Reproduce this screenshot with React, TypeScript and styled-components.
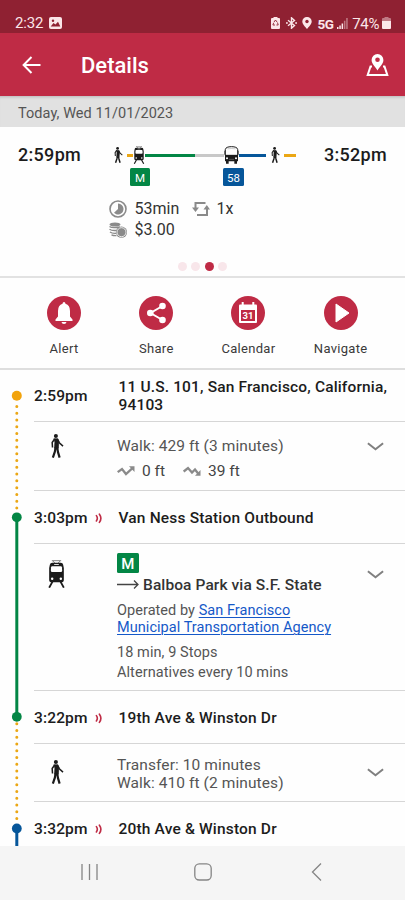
import React from "react";
import styled, { createGlobalStyle } from "styled-components";

const crimson = "#bf2b45";
const green = "#038645";
const blue = "#06569a";
const amber = "#eba715";

const GlobalStyle = createGlobalStyle`
  * { box-sizing: border-box; }
  body {
    margin: 0;
    background: #fff;
    font-family: Roboto, "Liberation Sans", sans-serif;
    color: #1c1c1c;
  }
  svg { display: block; flex: none; }
`;

const Screen = styled.div`
  width: 405px;
  height: 900px;
  display: flex;
  flex-direction: column;
  overflow: hidden;
  background: #fefefe;
`;

const Label = styled.span<{ $size: number; $weight?: number; $spacing?: number; $color?: string; $line?: number }>`
  font-size: ${(p) => p.$size}px;
  font-weight: ${(p) => p.$weight ?? 400};
  letter-spacing: ${(p) => p.$spacing ?? 0}px;
  line-height: ${(p) => p.$line ?? 18}px;
  color: ${(p) => p.$color ?? "inherit"};
  white-space: nowrap;
`;

const StatusBar = styled.header`
  height: 33px;
  flex: none;
  padding: 13px 14px 0 15px;
  display: flex;
  justify-content: space-between;
  background: #8f2132;
  color: #fbe6e9;
`;

const StatusGroup = styled.div`
  display: flex;
  align-items: center;
  height: 20px;
`;

const StatusIcon = styled.span<{ $left: number }>`
  margin-left: ${(p) => p.$left}px;
`;

const AppBar = styled.div`
  height: 63px;
  flex: none;
  display: flex;
  align-items: center;
  padding: 1px 16px 0 22px;
  background: ${crimson};
  color: #fff;
`;

const Title = styled.h1`
  flex: 1;
  margin: 1px 0 0 40px;
  font-size: 22px;
  font-weight: 500;
  line-height: 28px;
`;

const DateBar = styled.div`
  height: 31px;
  flex: none;
  padding: 7px 18px 0;
  background: #e1e1e1;
  box-shadow: inset 0 3px 3px -2px rgba(0, 0, 0, 0.18);
`;

const Summary = styled.section`
  height: 151px;
  flex: none;
  display: flex;
  flex-direction: column;
  border-bottom: 2px solid #e2e2e2;
`;

const SummaryTop = styled.div`
  display: flex;
  align-items: flex-start;
  height: 71px;
  padding: 17px 18px 0;
`;

const Strip = styled.div`
  display: flex;
  align-items: center;
  height: 22px;
`;

const StripColumn = styled.div`
  display: flex;
  flex-direction: column;
  gap: 2px;
  flex: 1;
  margin-left: 32.500px;
`;

const Segment = styled.i<{ $w: number; $color: string; $left?: number }>`
  width: ${(p) => p.$w}px;
  height: 3px;
  margin-left: ${(p) => p.$left ?? 0}px;
  background: ${(p) => p.$color};
`;

const StripBadges = styled.div`
  display: flex;
  padding-left: 16.500px;
  gap: 73px;
`;

const LineBadge = styled.span<{ $color: string; $w: number; $h: number; $size: number; $weight?: number }>`
  display: inline-flex;
  align-items: center;
  justify-content: center;
  width: ${(p) => p.$w}px;
  height: ${(p) => p.$h}px;
  border-radius: 1.5px;
  background: ${(p) => p.$color};
  color: #fff;
  font-size: ${(p) => p.$size}px;
  font-weight: ${(p) => p.$weight ?? 400};
  padding-top: 1px;
`;

const Facts = styled.div`
  display: grid;
  grid-template-columns: 25.500px 57px 25px 1fr;
  grid-auto-rows: 21.5px;
  align-items: center;
  padding-left: 109px;
`;

const Pager = styled.div`
  display: flex;
  justify-content: center;
  gap: 4.5px;
  margin-top: 21px;
`;

const PageDot = styled.i<{ $active?: boolean }>`
  width: 9px;
  height: 9px;
  border-radius: 50%;
  background: ${(p) => (p.$active ? crimson : "#f8e6ea")};
`;

const Actions = styled.nav`
  height: 92px;
  flex: none;
  display: grid;
  grid-template-columns: repeat(4, 92.2px);
  padding: 18px 18px 0;
  border-bottom: 2px solid #dedede;
`;

const Action = styled.button`
  display: flex;
  flex-direction: column;
  align-items: center;
  gap: 10px;
  padding: 0;
  border: 0;
  background: none;
  font-family: inherit;
  color: #3a3a3a;
`;

const ActionDisc = styled.span`
  width: 34px;
  height: 34px;
  border-radius: 50%;
  background: ${crimson};
  display: grid;
  place-items: center;
`;

const Itinerary = styled.main`
  flex: 1;
  min-height: 0;
  display: flex;
  overflow: hidden;
`;

const Steps = styled.div`
  flex: 1;
`;

const Step = styled.div<{ $h: number; $last?: boolean }>`
  display: grid;
  grid-template-columns: 84.500px 1fr;
  height: ${(p) => p.$h}px;
  border-bottom: ${(p) => (p.$last ? "0" : "1px solid #d6d6d6")};
`;

const TimeCell = styled.div<{ $top: number }>`
  display: flex;
  align-items: center;
  gap: 7px;
  height: 18px;
  margin-top: ${(p) => p.$top}px;
`;

const PlaceCell = styled.div<{ $top: number }>`
  display: flex;
  flex-direction: column;
  padding-top: ${(p) => p.$top}px;
`;

const ModeCell = styled.div<{ $top: number; $left: number }>`
  padding: ${(p) => p.$top}px 0 0 ${(p) => p.$left}px;
`;

const LegCell = styled.div<{ $top: number }>`
  display: flex;
  justify-content: space-between;
  align-items: flex-start;
  padding: ${(p) => p.$top}px 21px 0 0;
  margin-left: -1.500px;
`;

const LegText = styled.div`
  display: flex;
  flex-direction: column;
  align-items: flex-start;
`;

const Line = styled.div<{ $top?: number; $gap?: number }>`
  display: flex;
  align-items: center;
  gap: ${(p) => p.$gap ?? 0}px;
  margin-top: ${(p) => p.$top ?? 0}px;
`;

const Chevron = styled.span<{ $top: number }>`
  margin-top: ${(p) => p.$top}px;
`;

const AgencyLink = styled.a`
  color: #1558c8;
  text-decoration: underline;
  text-underline-offset: 2px;
  text-decoration-thickness: 1px;
`;

const SystemNav = styled.footer`
  height: 54px;
  flex: none;
  display: flex;
  align-items: flex-start;
  padding: 17px 0 0 81px;
  background: #f5f5f5;
`;

const NavKey = styled.span<{ $left?: number }>`
  margin-left: ${(p) => p.$left ?? 0}px;
`;

const Walker = ({ w, h }: { w: number; h: number }) => (
  <svg width={w} height={h} viewBox="0 0 36 71" fill="none" stroke="#1b1b1b" strokeLinejoin="round">
    <circle cx="14" cy="6" r="6" fill="#1b1b1b" stroke="none" />
    <path d="M8 14h12l3 9-2 19h-11l1-18z" fill="#1b1b1b" strokeWidth="2" />
    <path d="M20 17l4 9 11 10" strokeWidth="4.500" />
    <path d="M10 15l-7 10 1 15" strokeWidth="4.500" />
    <path d="M13 40l-2 12-6 18M18 40l2 13 5 17" strokeWidth="6.500" />
  </svg>
);

const Tram = ({ w, h }: { w: number; h: number }) => (
  <svg width={w} height={h} viewBox="0 0 48 84">
    <path d="M10 2h28M13 3l6 6M35 3l-6 6" stroke="#555" strokeWidth="2.200" fill="none" />
    <path d="M4 14q1-6 7-6h26q6 0 7 6l2 10v35q0 8-8 8H10q-8 0-8-8V24z" fill="#1b1b1b" />
    <path d="M11 19h26q3 0 3.300 3l.7 10q0 4-4 4H11q-4 0-4-4l.7-10q.3-3 3.300-3z" fill="#fff" />
    <path d="M17 13.500h14" stroke="#fff" strokeWidth="2.500" />
    <circle cx="11" cy="56" r="3.700" fill="#fff" />
    <circle cx="37" cy="56" r="3.700" fill="#fff" />
    <path d="M12 65L2 83M36 65l10 18" stroke="#1b1b1b" strokeWidth="5.500" fill="none" />
  </svg>
);

const Bus = () => (
  <svg width="15" height="18" viewBox="0 0 45 54">
    <path d="M4 28V10Q6 2 22.500 2T41 10v18z" fill="#fff" stroke="#1b1b1b" strokeWidth="3" />
    <path d="M10 8.500q12-2 25 0" stroke="#999" strokeWidth="1.500" fill="none" />
    <path d="M3 27h39v17q0 2-2 2H5q-2 0-2-2z" fill="#1b1b1b" />
    <path d="M1 14v12M44 14v12" stroke="#1b1b1b" strokeWidth="2" />
    <circle cx="9" cy="37" r="3" fill="#fff" />
    <circle cx="36" cy="37" r="3" fill="#fff" />
    <path d="M15 40h15" stroke="#888" strokeWidth="1.500" />
    <path d="M6 45h8v8H6zM31 45h8v8h-8z" fill="#1b1b1b" />
  </svg>
);

const Live = () => (
  <svg width="8" height="11" viewBox="0 0 8 11" fill="none" stroke="#bf2b45" strokeWidth="1.600" strokeLinecap="round">
    <path d="M1.400 2.600q1.900 2.700 0 5.400M4.400 1.200q3 4.100 0 8.200" />
  </svg>
);

const ChevronIcon = () => (
  <svg width="17" height="9" viewBox="0 0 17 9" fill="none" stroke="#808080" strokeWidth="2">
    <path d="M.9 1.300l7.600 6 7.600-6" />
  </svg>
);

const Trend = ({ down }: { down?: boolean }) => (
  <svg width="18" height="10" viewBox="0 0 18 10" fill="none" stroke="#8a8a8a" strokeWidth="2.300">
    {down ? <path d="M.7 5.500L5 2l4 4.500 3-3L15.500 8" /> : <path d="M.7 6.200L5 3l4 5 6.500-5.800" />}
    <path d={down ? "M17.500 4v5.700H12z" : "M12 .3h5.500V6z"} fill="#8a8a8a" stroke="none" />
  </svg>
);

const Rail = () => (
  <svg width="34" height="476" viewBox="0 370 34 476">
    <g stroke={amber} strokeWidth="3" strokeLinecap="round" strokeDasharray="0 6.770">
      <path d="M16.800 406.400V513" />
      <path d="M16.800 723.700V824" />
    </g>
    <path d="M16.800 517V717" stroke={green} strokeWidth="3" />
    <path d="M16.800 829v18" stroke={blue} strokeWidth="3" />
    <circle cx="16.800" cy="395.700" r="5" fill="#f2a30c" />
    <circle cx="16.800" cy="517.300" r="4.900" fill={green} />
    <circle cx="16.800" cy="716.800" r="4.900" fill={green} />
    <circle cx="16.800" cy="828.500" r="4.900" fill={blue} />
  </svg>
);

const Stop = ({ h, time, place, top, last }: { h: number; time: string; place: string; top: number; last?: boolean }) => (
  <Step $h={h} $last={last}>
    <TimeCell $top={top}>
      <Label $size={15.5} $weight={500} $spacing={0.15}>{time}</Label>
      <Live />
    </TimeCell>
    <PlaceCell $top={top}>
      <Label $size={15.5} $weight={500} $spacing={0.17}>{place}</Label>
    </PlaceCell>
  </Step>
);

export default function App() {
  return (
    <Screen>
      <GlobalStyle />
      <StatusBar>
        <StatusGroup>
          <Label $size={15} $spacing={-0.2}>2:32</Label>
          <StatusIcon $left={6}>
            <svg width="13" height="12" viewBox="0 0 13 12">
              <rect width="13" height="12" rx="2" fill="#fbe6e9" />
              <circle cx="4" cy="3.700" r="1.200" fill="#8f2132" />
              <path d="M1.700 9.500L4.500 6l2 1.500L9 4.700l2.300 4.800z" fill="#8f2132" />
            </svg>
          </StatusIcon>
        </StatusGroup>
        <StatusGroup>
          <svg width="9" height="12" viewBox="0 0 9 12">
            <path d="M2.500 0h4v1H8q1 0 1 1v9q0 1-1 1H1q-1 0-1-1V2q0-1 1-1h1.500z" fill="#fbe6e9" />
            <path d="M3 5l1.500-2L6 5M6.500 5.500L7.200 8H5.400M4 8H1.900l.8-2.300" fill="none" stroke="#8f2132" strokeWidth=".9" />
          </svg>
          <StatusIcon $left={6}>
            <svg width="11" height="12" viewBox="0 0 11 12" fill="none" stroke="#fbe6e9" strokeWidth="1.400">
              <path d="M2 3.200l6.500 5.300-3 2.700V.8l3 2.700L2 8.800" />
              <path d="M0 6h1.800M9.200 6H11" strokeWidth="1.600" />
            </svg>
          </StatusIcon>
          <StatusIcon $left={5}>
            <svg width="10" height="12" viewBox="0 0 10 12">
              <path d="M5 0a4.600 4.600 0 014.700 4.600C9.700 7.500 6.600 10 5 12 3.400 10 .3 7.500.3 4.600A4.600 4.600 0 015 0z" fill="#fbe6e9" />
              <circle cx="5" cy="4.500" r="1.700" fill="#8f2132" />
            </svg>
          </StatusIcon>
          <StatusIcon $left={5}>
            <Label $size={13.5} $weight={700} $spacing={-0.5}>5G</Label>
          </StatusIcon>
          <StatusIcon $left={4}>
            <svg width="11" height="11" viewBox="0 0 11 11" fill="#fbe6e9">
              <path d="M0 9h1.500v2H0zM2.300 7.500h1.500V11H2.300zM4.600 5.500h1.500V11H4.600z" />
              <path d="M6.900 2.800h1.500V11H6.900zM9.200 0h1.500v11H9.200z" opacity=".45" />
            </svg>
          </StatusIcon>
          <StatusIcon $left={4}>
            <Label $size={15} $spacing={-0.4}>74%</Label>
          </StatusIcon>
          <StatusIcon $left={3}>
            <svg width="9" height="12" viewBox="0 0 9 12" fill="#fbe6e9">
              <path d="M2.500 0h4v1H8q1 0 1 1v2H0V2q0-1 1-1h1.500z" opacity=".45" />
              <path d="M0 4h9v7q0 1-1 1H1q-1 0-1-1z" />
            </svg>
          </StatusIcon>
        </StatusGroup>
      </StatusBar>

      <AppBar>
        <svg width="19" height="18" viewBox="0 0 19 18" fill="none" stroke="#fff" strokeWidth="2">
          <path d="M18.500 9H2M9.500 1L1.600 9l7.900 8" />
        </svg>
        <Title>Details</Title>
        <svg width="23" height="23" viewBox="0 0 23 23">
          <path d="M11.500 0a5.900 5.900 0 015.900 5.900c0 4-3.700 6.600-5.900 10.500-2.200-3.900-5.900-6.500-5.900-10.500A5.900 5.900 0 0111.500 0z" fill="#fff" />
          <circle cx="11.500" cy="5.700" r="2.300" fill={crimson} />
          <path d="M6 12.500H4.500L1.700 21h19.600l-2.800-8.500H17" fill="none" stroke="#fff" strokeWidth="2" />
        </svg>
      </AppBar>

      <DateBar>
        <Label $size={14.5} $spacing={0.06} $color="#555">Today, Wed 11/01/2023</Label>
      </DateBar>

      <Summary>
        <SummaryTop>
          <Label $size={18} $weight={500} $spacing={0.3} $line={22}>2:59pm</Label>
          <StripColumn>
            <Strip>
              <Walker w={9} h={16} />
              <Segment $w={6} $color={amber} $left={4} />
              <Tram w={12} h={18} />
              <Segment $w={50} $color={green} />
              <Segment $w={29} $color="#c8c8c8" />
              <Bus />
              <Segment $w={27} $color={blue} />
              <Segment $w={5} $color="transparent" />
              <Walker w={9} h={16} />
              <Segment $w={12} $color={amber} $left={4} />
            </Strip>
            <StripBadges>
              <LineBadge $color={green} $w={20} $h={18} $size={11.5}>M</LineBadge>
              <LineBadge $color={blue} $w={21} $h={18} $size={11.5}>58</LineBadge>
            </StripBadges>
          </StripColumn>
          <Label $size={18} $weight={500} $spacing={0.3} $line={22}>3:52pm</Label>
        </SummaryTop>
        <Facts>
          <svg width="18" height="18" viewBox="0 0 18 18">
            <circle cx="9" cy="9" r="8" fill="none" stroke="#8a8a8a" strokeWidth="1.600" />
            <path d="M9 3.500a5.500 5.500 0 11-4 9.300L9 9z" fill="#8a8a8a" />
          </svg>
          <Label $size={16} $color="#333">53min</Label>
          <svg width="18" height="16" viewBox="0 0 18 16">
            <path d="M13.500 2H3.500v7M5 14h10V7" fill="none" stroke="#8a8a8a" strokeWidth="2" />
            <path d="M0 6.500h7L3.500 11zM11.500 8.500h6.500L14.800 4z" fill="#8a8a8a" />
          </svg>
          <Label $size={16} $color="#333">1x</Label>
          <svg width="18" height="16" viewBox="0 0 18 16">
            <ellipse cx="6" cy="2.500" rx="5.500" ry="2" fill="#8a8a8a" />
            <path d="M.5 4.500Q3 6.500 11 5M.5 7.200Q3 9 8 8.300M1 10q2 1.600 6 1.300M2.500 12.800q2 1 5 .8" fill="none" stroke="#8a8a8a" strokeWidth="1.300" />
            <circle cx="12.500" cy="10.200" r="5.600" fill="#8a8a8a" />
            <circle cx="12.500" cy="10.200" r="4.500" fill="none" stroke="#fff" strokeWidth=".8" />
          </svg>
          <Label $size={16} $color="#333">$3.00</Label>
        </Facts>
        <Pager>
          <PageDot />
          <PageDot />
          <PageDot $active />
          <PageDot />
        </Pager>
      </Summary>

      <Actions>
        <Action>
          <ActionDisc>
            <svg width="20" height="23" viewBox="0 0 20 23" fill="#fff">
              <path d="M10 0q1.300 0 1.500 1.700Q16 3 16 9v5.500l2.500 3V19h-17v-1.500l2.500-3V9q0-6 4.500-7.300Q8.700 0 10 0zM7.500 20h5q-.3 2-2.500 2t-2.500-2z" />
            </svg>
          </ActionDisc>
          <Label $size={13} $spacing={0.3}>Alert</Label>
        </Action>
        <Action>
          <ActionDisc>
            <svg width="21" height="22" viewBox="0 0 21 22" fill="#fff">
              <path d="M16.500 4L4.500 11l12 7" fill="none" stroke="#fff" strokeWidth="2" />
              <circle cx="16.500" cy="4" r="3.300" />
              <circle cx="4.300" cy="11" r="3.300" />
              <circle cx="16.500" cy="18" r="3.300" />
            </svg>
          </ActionDisc>
          <Label $size={13} $spacing={0.3}>Share</Label>
        </Action>
        <Action>
          <ActionDisc>
            <svg width="20" height="22" viewBox="0 0 20 22">
              <path d="M2 2.500h16q1 0 1 1V20q0 1-1 1H2q-1 0-1-1V3.500q0-1 1-1z" fill="#fff" />
              <rect x="3" y="8" width="14" height="11" fill={crimson} />
              <path d="M4.700 0v4.500M15.300 0v4.500" stroke="#fff" strokeWidth="2" />
              <text x="10" y="17" textAnchor="middle" fontSize="9.500" fontWeight="700" fill="#fff">31</text>
            </svg>
          </ActionDisc>
          <Label $size={13} $spacing={0.3}>Calendar</Label>
        </Action>
        <Action>
          <ActionDisc>
            <svg width="20" height="20" viewBox="0 0 20 20">
              <path d="M5 1l13 9-13 9z" fill="#fff" stroke="#fff" strokeLinejoin="round" />
            </svg>
          </ActionDisc>
          <Label $size={13} $spacing={0.3}>Navigate</Label>
        </Action>
      </Actions>

      <Itinerary>
        <Rail />
        <Steps>
          <Step $h={52}>
            <TimeCell $top={17}>
              <Label $size={15.5} $weight={500} $spacing={0.15}>2:59pm</Label>
            </TimeCell>
            <PlaceCell $top={8}>
              <Label $size={15.5} $weight={500} $spacing={0.15}>11 U.S. 101, San Francisco, California,</Label>
              <Label $size={15.5} $weight={500} $spacing={0.15}>94103</Label>
            </PlaceCell>
          </Step>

          <Step $h={69}>
            <ModeCell $top={12} $left={17}><Walker w={12.5} h={24} /></ModeCell>
            <LegCell $top={15}>
              <LegText>
                <Label $size={15.5} $spacing={0.09} $color="#555">Walk: 429 ft (3 minutes)</Label>
                <Line $top={7} $gap={7}>
                  <Trend />
                  <Label $size={15.5} $color="#444">0 ft</Label>
                  <Segment $w={4} $color="transparent" />
                  <Trend down />
                  <Label $size={15.5} $color="#444">39 ft</Label>
                </Line>
              </LegText>
              <Chevron $top={4.5}><ChevronIcon /></Chevron>
            </LegCell>
          </Step>

          <Stop h={53} time="3:03pm" place="Van Ness Station Outbound" top={18} />

          <Step $h={147}>
            <ModeCell $top={16} $left={14}><Tram w={17} h={28} /></ModeCell>
            <LegCell $top={9.4}>
              <LegText>
                <LineBadge $color={green} $w={21.5} $h={20} $size={15} $weight={500}>M</LineBadge>
                <Line $top={2.6} $gap={4}>
                  <svg width="22" height="9" viewBox="0 0 22 9" fill="none" stroke="#444" strokeWidth="1.300">
                    <path d="M0 4.500h21M17 .5l4 4-4 4" />
                  </svg>
                  <Label $size={15.5} $weight={500} $spacing={0.1} $color="#333">Balboa Park via S.F. State</Label>
                </Line>
                <Line $top={8}>
                  <Label $size={14.5} $spacing={0.05} $color="#555" $line={17.4}>
                    Operated by <AgencyLink>San Francisco<br />Municipal Transportation Agency</AgencyLink>
                  </Label>
                </Line>
                <Label as="div" $size={14.5} $spacing={0.07} $color="#555" $line={20}>
                  <Line $top={6}>18 min, 9 Stops</Line>
                  Alternatives every 10 mins
                </Label>
              </LegText>
              <Chevron $top={16.6}><ChevronIcon /></Chevron>
            </LegCell>
          </Step>

          <Stop h={53} time="3:22pm" place="19th Ave &amp; Winston Dr" top={18} />

          <Step $h={58}>
            <ModeCell $top={16} $left={17}><Walker w={12.5} h={24} /></ModeCell>
            <LegCell $top={12}>
              <LegText>
                <Label $size={15.5} $spacing={0.09} $color="#555">Transfer: 10 minutes</Label>
                <Label $size={15.5} $spacing={0.09} $color="#555">Walk: 410 ft (2 minutes)</Label>
              </LegText>
              <Chevron $top={12}><ChevronIcon /></Chevron>
            </LegCell>
          </Step>

          <Stop h={44} time="3:32pm" place="20th Ave &amp; Winston Dr" top={18} last />
        </Steps>
      </Itinerary>

      <SystemNav>
        <NavKey>
          <svg width="18" height="18" viewBox="0 0 18 18" stroke="#858585" strokeWidth="1.300">
            <path d="M1 1v16M8.500 1v16M16 1v16" />
          </svg>
        </NavKey>
        <NavKey $left={95}>
          <svg width="18" height="18" viewBox="0 0 18 18" fill="none" stroke="#858585" strokeWidth="1.300">
            <rect x=".8" y=".8" width="16.400" height="16.200" rx="4.500" />
          </svg>
        </NavKey>
        <NavKey $left={99}>
          <svg width="11" height="18" viewBox="0 0 11 18" fill="none" stroke="#858585" strokeWidth="1.300">
            <path d="M10 .5L1.500 9l8.500 8.500" />
          </svg>
        </NavKey>
      </SystemNav>
    </Screen>
  );
}
